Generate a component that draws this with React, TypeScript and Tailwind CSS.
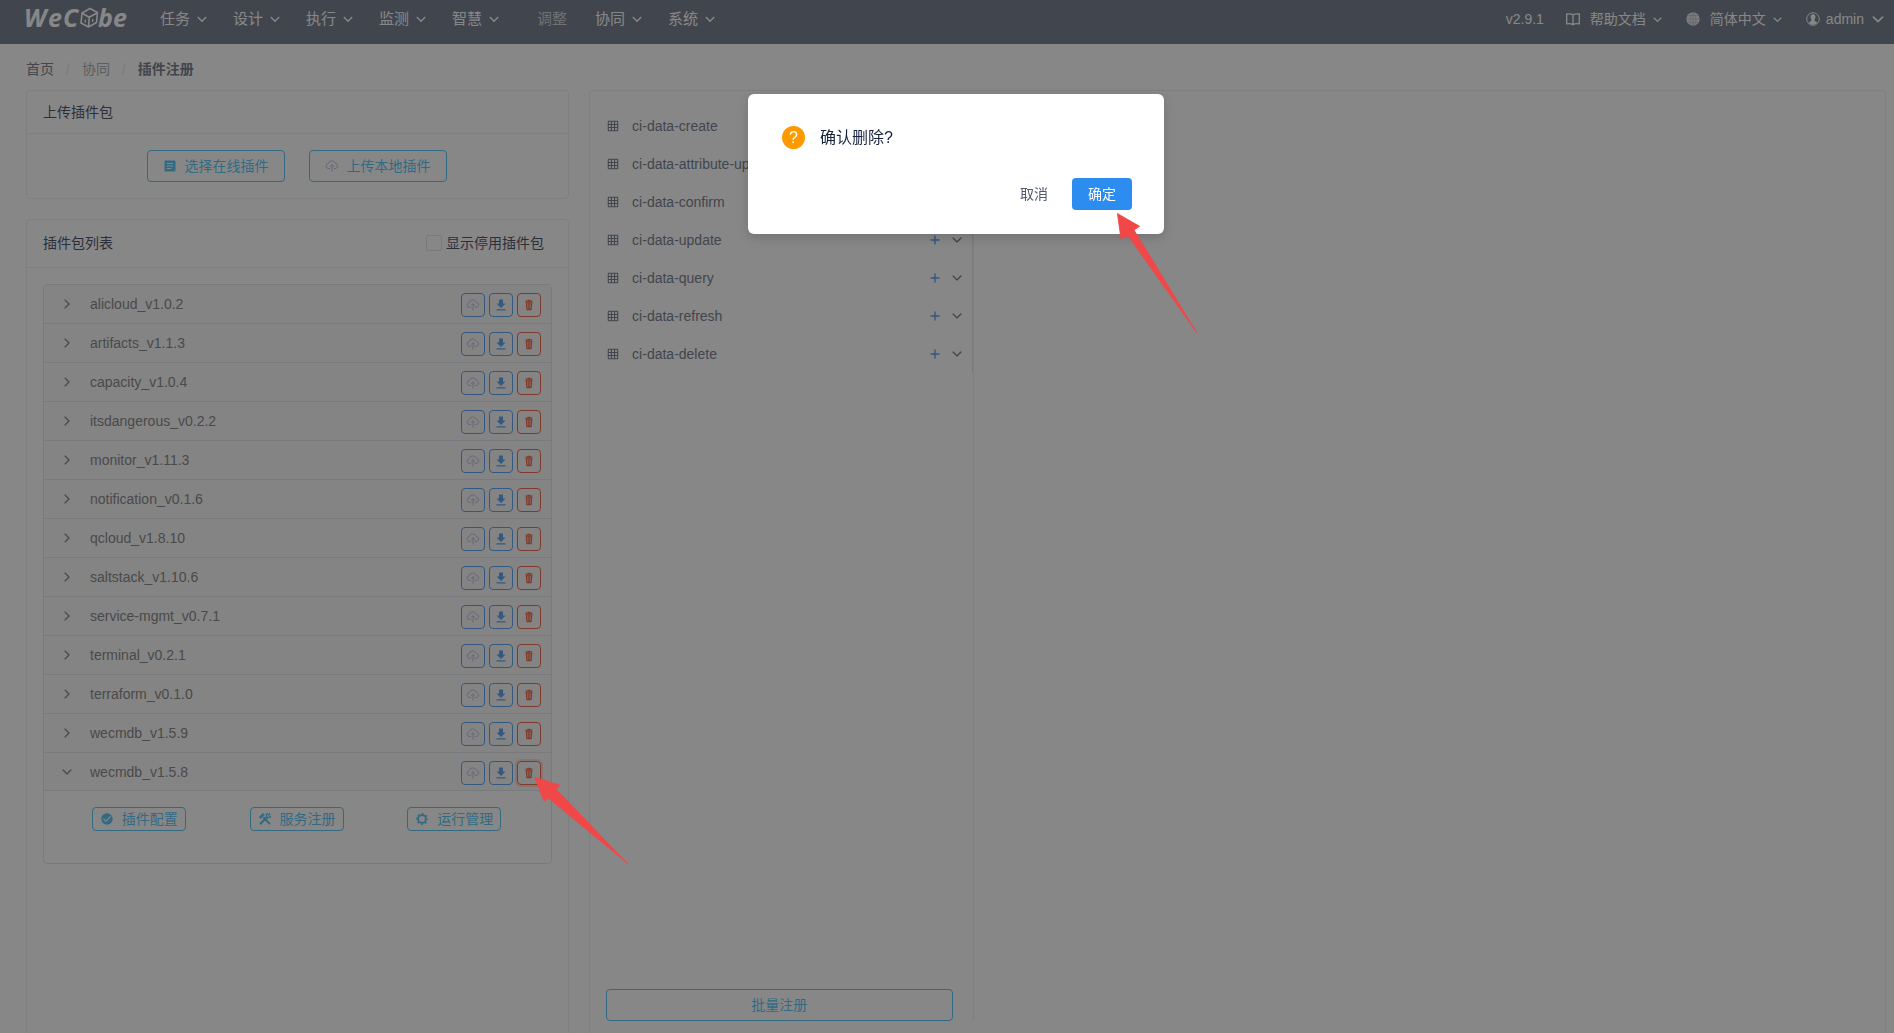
import React from "react";
import {
  IoIosArrowDown,
  IoIosArrowForward,
  IoIosTrash,
  IoMdGrid,
  IoMdCheckmarkCircle,
} from "react-icons/io";

const plugins = [
  "alicloud_v1.0.2",
  "artifacts_v1.1.3",
  "capacity_v1.0.4",
  "itsdangerous_v0.2.2",
  "monitor_v1.11.3",
  "notification_v0.1.6",
  "qcloud_v1.8.10",
  "saltstack_v1.10.6",
  "service-mgmt_v0.7.1",
  "terminal_v0.2.1",
  "terraform_v0.1.0",
  "wecmdb_v1.5.9",
  "wecmdb_v1.5.8",
];
const openPlugin = "wecmdb_v1.5.8";

const services = [
  "ci-data-create",
  "ci-data-attribute-update",
  "ci-data-confirm",
  "ci-data-update",
  "ci-data-query",
  "ci-data-refresh",
  "ci-data-delete",
];

const menus = ["任务", "设计", "执行", "监测", "智慧", "调整", "协同", "系统"];

function Chevron({ size = 10 }: { size?: number }) {
  return (
    <svg width={size} height={size} viewBox="0 0 10 10" fill="none" stroke="currentColor" strokeWidth="1.4" className="shrink-0" aria-hidden="true">
      <path d="M0.8 3 5 7.2 9.2 3" />
    </svg>
  );
}

function CloudUpload() {
  return (
    <svg width="14" height="14" viewBox="0 0 14 14" fill="none" stroke="#b3aad6" strokeWidth="1" className="shrink-0" aria-hidden="true">
      <path d="M5.2 9.5H3.2A2.4 2.4 0 0 1 3 4.8 3.9 3.9 0 0 1 10.4 4.4 2.6 2.6 0 0 1 10.6 9.5H8.8" />
      <path d="M7 12.5V5.8M4.9 7.8 7 5.7 9.1 7.8" />
    </svg>
  );
}

function Download() {
  return (
    <svg width="14" height="14" viewBox="0 0 14 14" fill="currentColor" aria-hidden="true">
      <path d="M5 1.5H9V5.5H11.5L7 10 2.5 5.5H5ZM2.5 11.2H11.5V12.4H2.5Z" />
    </svg>
  );
}

function Paper() {
  return (
    <svg width="14" height="14" viewBox="0 0 14 14" aria-hidden="true">
      <rect x="1.5" y="1.5" width="11" height="11" rx="1" fill="currentColor" />
      <path d="M3.8 4.5H10.2M3.8 7H10.2M3.8 9.5H8.200" stroke="#fff" strokeWidth="1" />
    </svg>
  );
}

function Tools() {
  return (
    <svg width="14" height="14" viewBox="0 0 14 14" fill="none" stroke="currentColor" aria-hidden="true">
      <path d="M5.2 5.2 12 12" strokeWidth="2" />
      <path d="M1 5.200 4.800 1.400 6.600 2.600 3 6.400Z" fill="currentColor" strokeWidth=".6" />
      <path d="M2 12.300 9 5.200" strokeWidth="2.200" />
      <path d="M12.200 1.600 10.400 3.400M8.400 2.600 8.600 5.400 11.600 5.600 13 4.200M8.400 2.800 10 1.200" strokeWidth="1.500" />
    </svg>
  );
}

function Gear() {
  return (
    <svg width="14" height="14" viewBox="0 0 14 14" fill="none" stroke="currentColor" aria-hidden="true">
      <circle cx="7" cy="7" r="3.900" strokeWidth="1.800" />
      <circle cx="7" cy="7" r="5.200" strokeWidth="1.400" strokeDasharray="2.040 2.040" strokeDashoffset="1.020" />
    </svg>
  );
}

function Logo() {
  return (
    <svg width="103" height="22" viewBox="0 0 103 22" role="img" aria-label="WeCube" className="shrink-0 overflow-visible">
      <g fill="#fff" fontFamily="'Open Sans', sans-serif" fontWeight="700" fontStyle="italic" fontSize="25">
        <text x="-2" y="20">W</text>
        <text x="22" y="20">e</text>
        <text x="37" y="20">C</text>
        <text x="72" y="20">be</text>
      </g>
      <g fill="none" stroke="#fff" strokeWidth="1.600" strokeLinejoin="round">
        <path d="M64 1.500 71.500 5.500 70.500 15.500 62.500 20 55 16 56 6Z" />
        <path d="M56.500 6.500 63.200 10.300 71 6M63.200 10.300 62.500 20" />
        <path d="M59.500 12.500 59.200 15.500M66.800 12 66.500 15" strokeWidth="1.300" />
      </g>
    </svg>
  );
}

function Header() {
  return (
    <header className="flex h-11 items-start bg-[#515a6e] pr-2.5 pl-[26px] text-white">
      <div className="flex h-[38px] w-full items-center">
        <a href="#home" className="mt-[-3px]"><Logo /></a>
        <nav className="ml-[31px] flex items-center gap-[26px] text-[15px]">
          {menus.map((m) =>
            m === "调整" ? (
              <button key={m} type="button" disabled className="pr-0.5 pl-3 text-[#c5c8ce]">{m}</button>
            ) : (
              <button key={m} type="button" className="flex items-center gap-[7px]">
                {m}
                <Chevron />
              </button>
            ),
          )}
        </nav>
        <div className="ml-auto flex items-center text-sm">
          <span>v2.9.1</span>
          <button type="button" className="ml-[22px] flex items-center">
            <svg width="14" height="14" viewBox="0 0 14 14" fill="none" stroke="currentColor" strokeWidth="1.3" aria-hidden="true">
              <path d="M7 2.800C5.500 1.800 2.800 1.800 .7 2V11.800C2.800 11.600 5.500 11.600 7 12.600 8.500 11.600 11.200 11.600 13.300 11.800V2C11.200 1.800 8.500 1.800 7 2.800ZM7 2.800V12.600" />
            </svg>
            <span className="mr-[7px] ml-2.5">帮助文档</span>
            <Chevron size={9} />
          </button>
          <button type="button" className="ml-6 flex items-center">
            <svg width="14" height="14" viewBox="0 0 14 14" aria-hidden="true">
              <circle cx="7" cy="7" r="6.700" fill="#e2e4e8" />
              <path d="M.5 7H13.500M7 .5V13.500M2 3.500H12M2 10.500H12M7 .5C3 3.500 3 10.500 7 13.500M7 .5C11 3.500 11 10.500 7 13.500" fill="none" stroke="#8d94a2" strokeWidth=".5" />
            </svg>
            <span className="mr-[7px] ml-2.5">简体中文</span>
            <Chevron size={9} />
          </button>
          <button type="button" className="ml-6 flex items-center">
            <svg width="14" height="14" viewBox="0 0 14 14" aria-hidden="true">
              <circle cx="7" cy="7" r="6.300" fill="none" stroke="#fff" strokeWidth="1" />
              <path d="M7 2.200C8.800 2.200 9.500 3.400 9.400 5 9.300 6.600 8.600 7.400 8.400 8.200 8.400 9.200 10.800 9.400 11.300 10.800 9 13.400 5 13.400 2.700 10.800 3.200 9.400 5.600 9.200 5.600 8.200 5.400 7.400 4.700 6.600 4.600 5 4.500 3.400 5.200 2.200 7 2.200Z" fill="#fff" />
            </svg>
            <span className="mr-2 ml-1.5">admin</span>
            <Chevron size={12} />
          </button>
        </div>
      </div>
    </header>
  );
}

function InfoButton({ icon, children, className }: { icon?: React.ReactNode; children: React.ReactNode; className: string }) {
  return (
    <button type="button" className={`flex items-center justify-center rounded border border-[#2db7f5] pb-px text-sm whitespace-nowrap text-[#2db7f5] ${className}`}>
      {icon}
      {children}
    </button>
  );
}

function PluginRow({ name }: { name: string }) {
  const open = name === openPlugin;
  return (
    <li className="border-b border-[#dcdee2] last:border-b-0">
      <div className={`flex h-[38px] items-center bg-[#f7f7f7] pr-2.5 pl-4 ${open ? "border-b border-[#dcdee2]" : ""}`}>
        <button type="button" aria-expanded={open} className="flex flex-1 items-center gap-4 text-left text-sm text-[#666]">
          {open ? <IoIosArrowDown size={14} /> : <IoIosArrowForward size={14} />}
          <span>{name}</span>
        </button>
        <div className="flex gap-1 pt-0.5">
          <button type="button" aria-label="注册" className="flex size-6 items-center justify-center rounded border border-[#2d8cf0]">
            <CloudUpload />
          </button>
          <button type="button" aria-label="下载" className="flex size-6 items-center justify-center rounded border border-[#2d8cf0] text-[#2d8cf0]">
            <Download />
          </button>
          <div className="relative">
            <button
              type="button"
              aria-label="删除"
              className={`flex size-6 items-center justify-center rounded border border-[#ed4014] text-[#ed4014] ${open ? "shadow-[0_0_0_2px_rgba(237,64,20,0.2)]" : ""}`}
            >
              <IoIosTrash size={14} />
            </button>
            {open && (
              <svg width="96" height="90" viewBox="0 0 96 90" className="absolute top-4 left-[17px] z-20" fill="#f04848" stroke="#f04848" strokeWidth=".8" strokeLinejoin="round" aria-hidden="true">
                <path d="M.8.4 26.300 8.300 22.300 12.300 93.700 86.700 14.700 21.300 10 24.300Z" />
              </svg>
            )}
          </div>
        </div>
      </div>
      {open && (
        <div className="grid grid-cols-3 justify-items-center pt-4 pr-[18px] pb-8 pl-4">
          <InfoButton className="h-6 w-[94px] gap-2" icon={<IoMdCheckmarkCircle size={14} />}>插件配置</InfoButton>
          <InfoButton className="h-6 w-[94px] gap-2" icon={<Tools />}>服务注册</InfoButton>
          <InfoButton className="h-6 w-[94px] gap-2" icon={<Gear />}>运行管理</InfoButton>
        </div>
      )}
    </li>
  );
}

function ConfirmDialog() {
  return (
    <div className="fixed inset-0 z-10 flex items-start justify-center bg-[rgba(55,55,55,0.6)] pt-[94px] pl-[18px]">
      <div role="dialog" aria-modal="true" aria-labelledby="confirm-title" className="relative w-[416px] rounded-md bg-white pt-8 pr-8 pb-6 pl-[34px] shadow-[0_4px_12px_rgba(0,0,0,0.15)]">
        <div className="flex h-[23px] items-center gap-[15px]">
          <span className="flex size-[23px] items-center justify-center rounded-full bg-[#ff9900] text-base text-white">?</span>
          <h2 id="confirm-title" className="text-base text-[#17233d]">确认删除?</h2>
        </div>
        <div className="mt-[29px] flex justify-end gap-2 text-sm">
          <button type="button" className="h-8 px-4 text-[#515a6e]">取消</button>
          <button type="button" className="h-8 w-[60px] rounded bg-[#2d8cf0] text-white">确定</button>
        </div>
        <svg width="82" height="122" viewBox="0 0 82 122" className="absolute top-[119px] left-[369px]" fill="#f04848" stroke="#f04848" strokeWidth=".8" strokeLinejoin="round" aria-hidden="true">
          <path d="M.4.5 22.600 13.300 17 17 80 120 11 22.700 4 26Z" />
        </svg>
      </div>
    </div>
  );
}

export default function App() {
  return (
    <div className="h-screen overflow-hidden bg-white font-['Liberation_Sans','Noto_Sans_CJK_SC',sans-serif] text-[#515a6e]">
      <Header />
      <main className="pr-2 pl-[26px]">
        <nav aria-label="breadcrumb" className="flex h-[46px] items-center pt-1 text-sm">
          <a href="#home">首页</a>
          <span className="mx-3 text-[#dcdee2]">/</span>
          <span className="text-[#999]">协同</span>
          <span className="mx-3 text-[#dcdee2]">/</span>
          <span className="font-bold">插件注册</span>
        </nav>
        <div className="flex gap-5">
          <div className="flex w-[29.2%] shrink-0 flex-col gap-5">
            <section className="rounded border border-[#e8eaec]">
              <h2 className="flex h-[43px] items-center border-b border-[#e8eaec] px-4 text-sm text-[#17233d]">上传插件包</h2>
              <div className="flex justify-center gap-6 py-4 pr-[18px] pl-4">
                <InfoButton className="h-8 w-[138px] gap-2" icon={<Paper />}>选择在线插件</InfoButton>
                <InfoButton className="h-8 w-[138px] gap-2" icon={<CloudUpload />}>上传本地插件</InfoButton>
              </div>
            </section>
            <section className="flex-1 rounded border border-[#e8eaec]">
              <div className="flex h-12 items-center justify-between border-b border-[#e8eaec] pr-6 pb-0.5 pl-4 text-sm text-[#17233d]">
                <h2>插件包列表</h2>
                <label className="flex items-center gap-1">
                  <input type="checkbox" className="size-4 appearance-none rounded-xs border border-[#dcdee2]" />
                  显示停用插件包
                </label>
              </div>
              <div className="p-4">
                <ul className="rounded-sm border border-[#dcdee2]">
                  {plugins.map((p) => (
                    <PluginRow key={p} name={p} />
                  ))}
                </ul>
              </div>
            </section>
          </div>
          <section className="flex-1 rounded border border-[#e8eaec] p-4">
            <div className="flex h-[calc(100vh-119px)] w-[29.1%] flex-col justify-between border-r border-[#e8eaec]">
              <ul className="border-r border-[#dcdee2] text-sm">
                {services.map((s) => (
                  <li key={s} className="flex h-[38px] items-center pr-2">
                    <IoMdGrid size={14} />
                    <span className="ml-3 flex-1">{s}</span>
                    <button type="button" aria-label="新增" className="text-[#2d8cf0]">
                      <svg width="10" height="10" viewBox="0 0 10 10" stroke="currentColor" strokeWidth="1.400" aria-hidden="true"><path d="M5 .5V9.500M.5 5H9.500" /></svg>
                    </button>
                    <button type="button" aria-label="展开" className="ml-2.5"><IoIosArrowDown size={14} /></button>
                  </li>
                ))}
              </ul>
              <div className="pr-5">
                <InfoButton className="h-8 w-full">批量注册</InfoButton>
              </div>
            </div>
          </section>
        </div>
      </main>
      <ConfirmDialog />
    </div>
  );
}
